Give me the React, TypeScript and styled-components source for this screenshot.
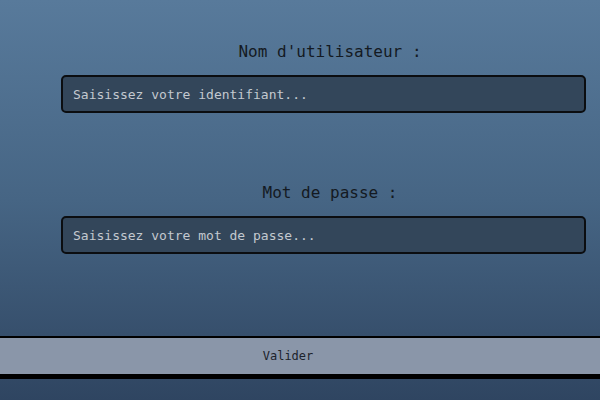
import React from 'react';
import styled, { createGlobalStyle } from 'styled-components';

const GlobalStyle = createGlobalStyle`
  html, body {
    margin: 0;
    padding: 0;
  }
  body {
    font-family: 'DejaVu Sans Mono', monospace;
  }
`;

const Page = styled.div`
  min-height: 400px;
  box-sizing: border-box;
  padding-top: 42px;
  display: flex;
  flex-direction: column;
  background: linear-gradient(180deg, #587a9b 0%, #466584 50%, #2f4561 100%);
`;

const Field = styled.div`
  display: flex;
  flex-direction: column;
  & + & {
    margin-top: 70px;
  }
`;

const Label = styled.label`
  display: block;
  padding-left: 60px;
  text-align: center;
  font-size: 16px;
  line-height: 20px;
  color: #141a22;
  margin-bottom: 13px;
`;

const TextInput = styled.input`
  box-sizing: border-box;
  margin-left: 61px;
  width: 525px;
  height: 38px;
  padding: 0 10px;
  border: 2px solid #0b0d10;
  border-radius: 5px;
  background: #33465a;
  color: #e4e8ec;
  font-family: 'DejaVu Sans Mono', monospace;
  font-size: 13px;
  outline: none;

  &::placeholder {
    color: #c3c9d0;
  }
`;

const SubmitButton = styled.button`
  margin-top: 82px;
  width: 100%;
  height: 43px;
  box-sizing: border-box;
  border: none;
  border-top: 2px solid #000;
  border-bottom: 5px solid #000;
  background: #8a96a9;
  color: #1c232c;
  font-family: 'DejaVu Sans Mono', monospace;
  font-size: 12px;
  padding: 0 24px 0 0;
  cursor: pointer;
`;

export default function App() {
  return (
    <>
      <GlobalStyle />
      <Page>
        <Field>
          <Label htmlFor="user">Nom d'utilisateur :</Label>
          <TextInput id="user" type="text" placeholder="Saisissez votre identifiant..." />
        </Field>
        <Field>
          <Label htmlFor="pass">Mot de passe :</Label>
          <TextInput id="pass" type="password" placeholder="Saisissez votre mot de passe..." />
        </Field>
        <SubmitButton type="button">Valider</SubmitButton>
      </Page>
    </>
  );
}
